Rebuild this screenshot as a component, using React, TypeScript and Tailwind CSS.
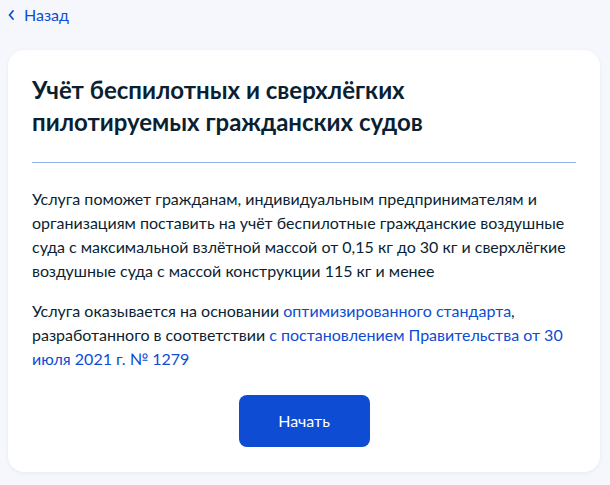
import React from "react";

export default function App() {
  return (
    <div className="min-h-[485px] w-full bg-[#f5f7fd] px-2 pt-[3px] pb-4" style={{ fontFamily: "Lato, 'Noto Sans', sans-serif" }}>
      <a className="flex h-6 items-center gap-[10px] text-[16px] text-[#0d4cd3]" href="#">
        <svg width="6" height="10" viewBox="0 0 6 10" fill="none">
          <path d="M5 1L1.5 5L5 9" stroke="#0d4cd3" strokeWidth="1.8" strokeLinecap="round" strokeLinejoin="round" />
        </svg>
        <span>Назад</span>
      </a>
      <div className="mt-[23px] w-[592px] rounded-2xl bg-white px-6 pt-6 pb-[25px] shadow-[0_1px_4px_rgba(0,20,80,0.06)]">
        <h1 className="text-[24px] font-bold leading-8 text-[#0b1f33]">
          Учёт беспилотных и сверхлёгких
          <br />
          пилотируемых гражданских судов
        </h1>
        <div className="mt-6 h-px bg-[#99b4f0]" />
        <p className="mt-6 text-[16px] leading-6 text-[#0b1f33]">
          Услуга поможет гражданам, индивидуальным предпринимателям и организациям поставить на учёт беспилотные гражданские воздушные суда с максимальной взлётной массой от 0,15 кг до 30 кг и сверхлёгкие воздушные суда с массой конструкции 115 кг и менее
        </p>
        <p className="mt-4 text-[16px] leading-6 text-[#0b1f33]">
          Услуга оказывается на основании <a href="#" className="text-[#0d4cd3]">оптимизированного стандарта</a>, разработанного в соответствии <a href="#" className="text-[#0d4cd3]">с постановлением Правительства от 30 июля 2021 г. № 1279</a>
        </p>
        <div className="mt-6 flex justify-center">
          <button className="h-[52px] w-[131px] rounded-lg bg-[#0d4cd3] text-[16px] text-white">Начать</button>
        </div>
      </div>
    </div>
  );
}
